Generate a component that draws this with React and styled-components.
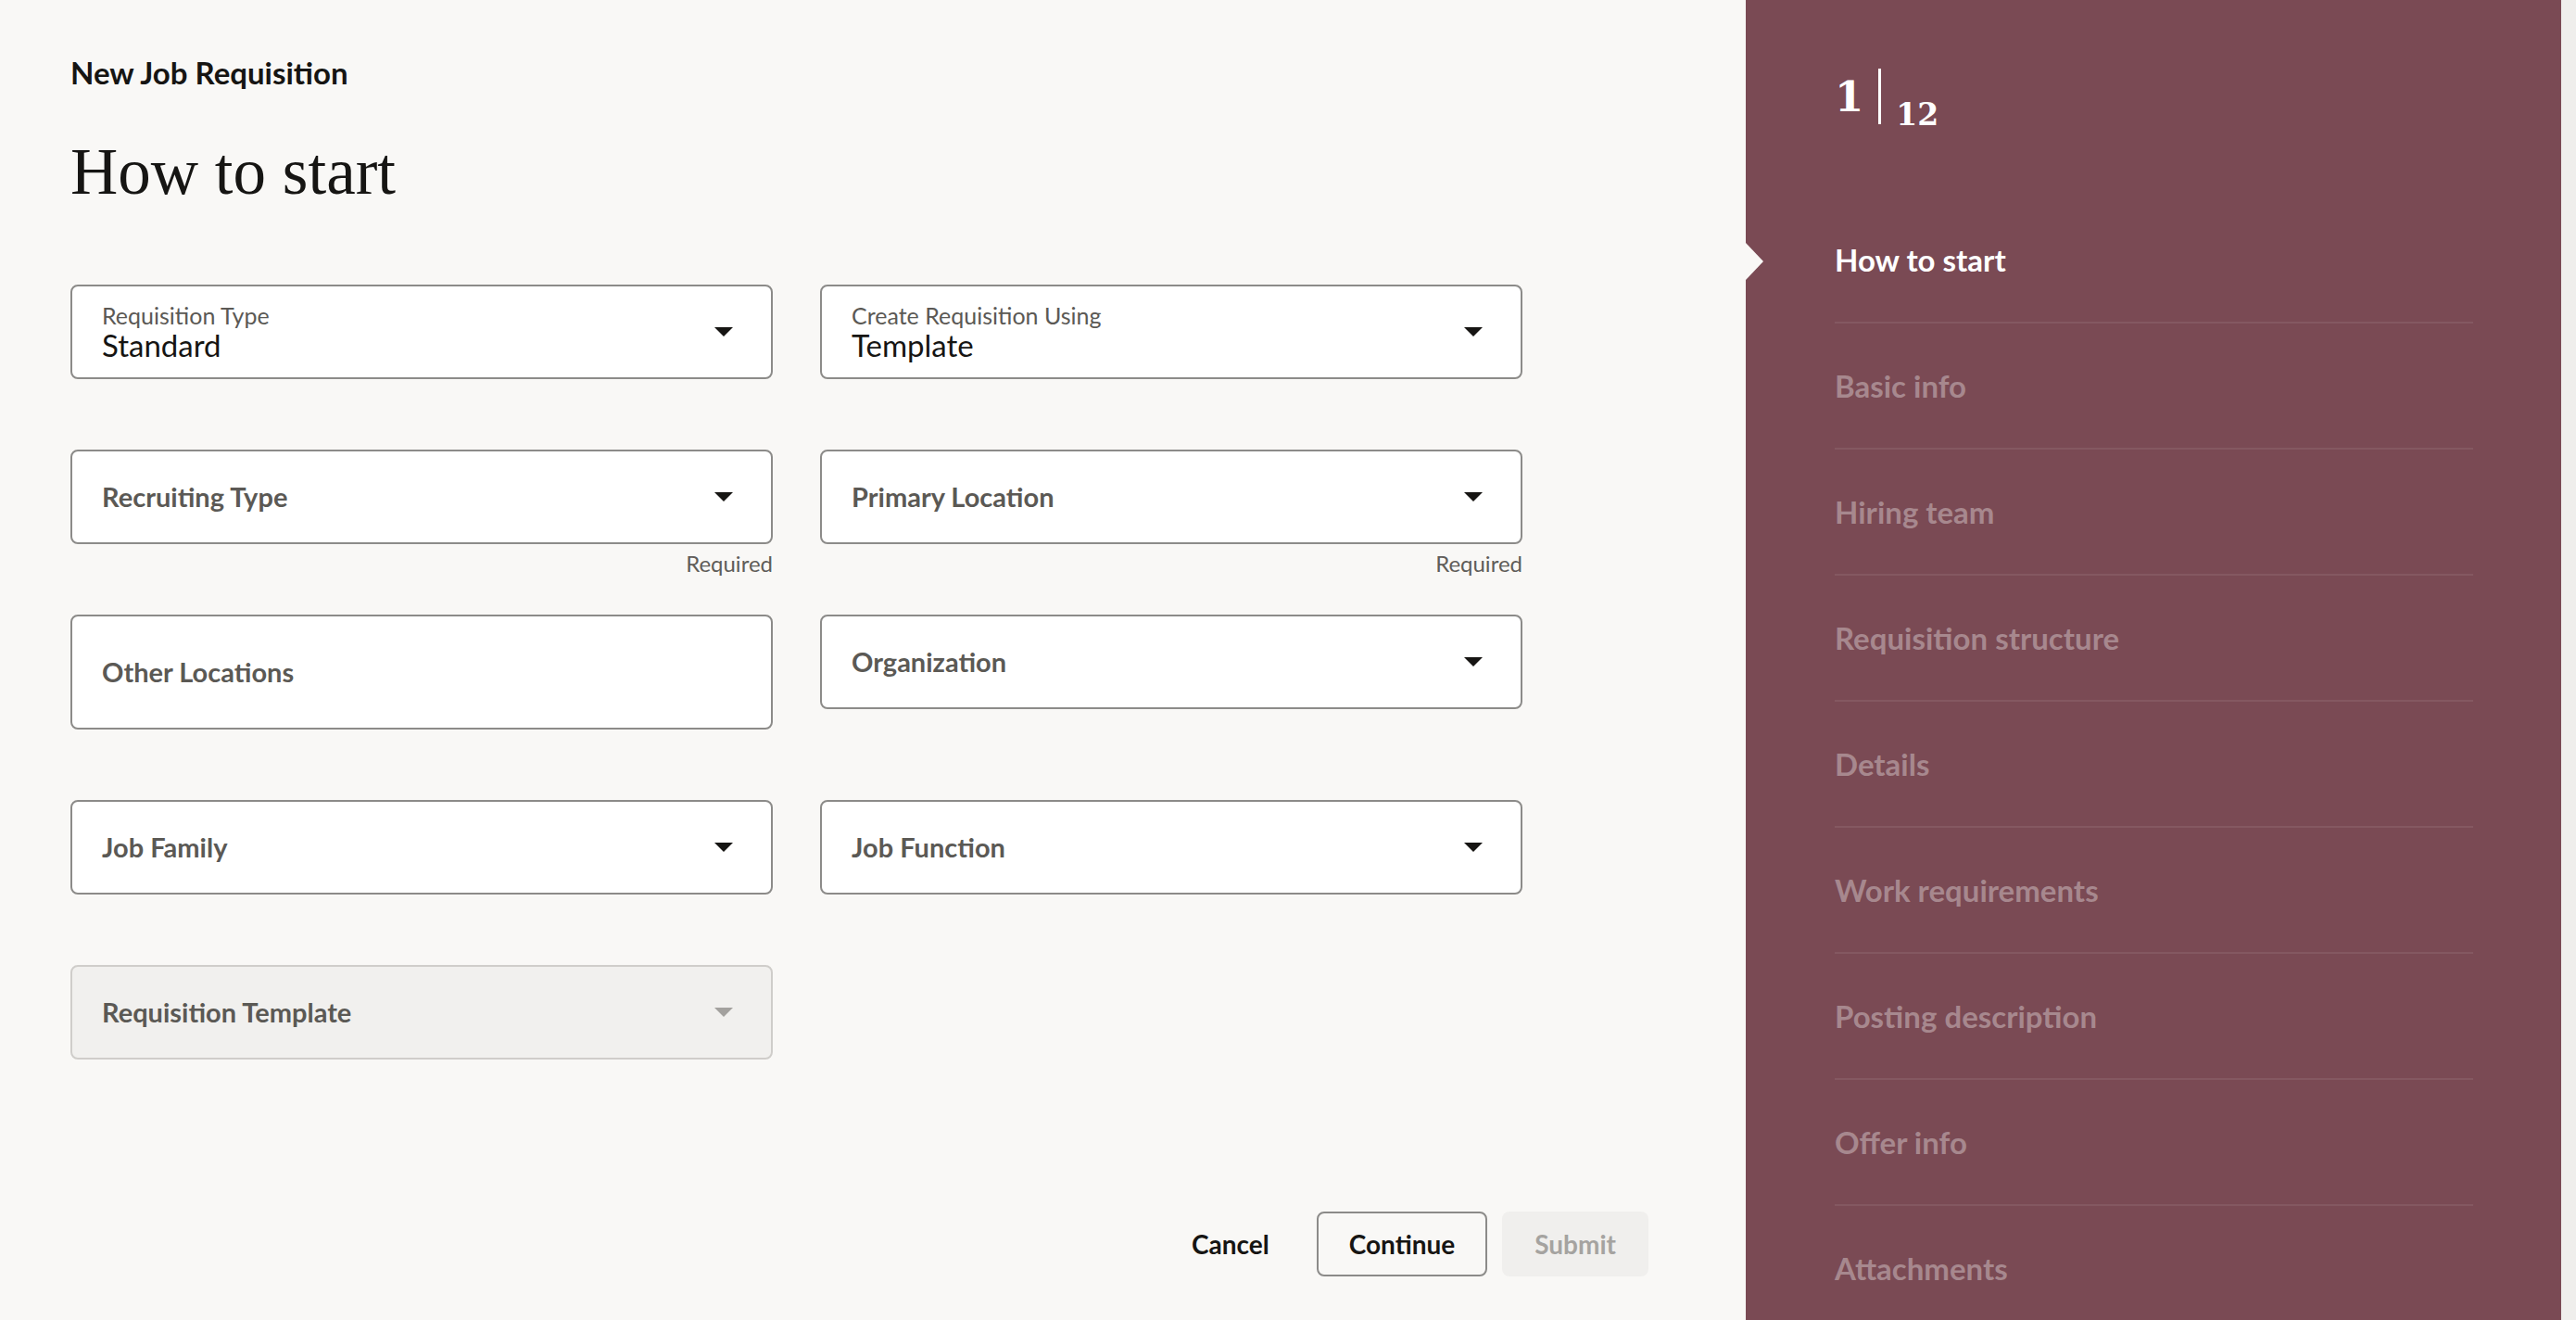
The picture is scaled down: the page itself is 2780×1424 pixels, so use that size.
import React from "react";
import styled, { createGlobalStyle, css } from "styled-components";

const GlobalStyle = createGlobalStyle`
  html, body {
    margin: 0;
    padding: 0;
    background-color: #f9f8f6;
    font-family: Lato, "Noto Sans", sans-serif;
    color: #161513;
    overflow: hidden;
  }
  * { box-sizing: border-box; }
`;

const Page = styled.div`
  display: flex;
  height: 100vh;
  width: 100vw;
  overflow: hidden;
`;

const Main = styled.main`
  flex: 1;
  display: flex;
  flex-direction: column;
  padding: 58px 105px 47px 76px;
`;

const Eyebrow = styled.div`
  font-size: 33px;
  line-height: 40px;
  font-weight: 700;
`;

const Title = styled.h1`
  margin: 47px 0 0;
  font-family: "Liberation Serif", serif;
  font-weight: 400;
  font-size: 71px;
  line-height: 80px;
`;

const FieldGrid = styled.div`
  margin-top: 82px;
  display: grid;
  grid-template-columns: 758px 758px;
  column-gap: 51px;
  row-gap: 38px;
  align-items: start;
`;

const Field = styled.div`
  display: flex;
  flex-direction: column;
`;

const Box = styled.div`
  height: ${(p) => (p.$tall ? 124 : 102)}px;
  border: 2px solid ${(p) => (p.$disabled ? "#cfcdca" : "#8c8b89")};
  border-radius: 8px;
  background: ${(p) => (p.$disabled ? "#f1f0ee" : "#ffffff")};
  display: flex;
  align-items: center;
  padding: 0 41px 0 32px;
`;

const BoxText = styled.div`
  flex: 1;
  display: flex;
  flex-direction: column;
`;

const SmallLabel = styled.span`
  font-size: 25px;
  line-height: 28px;
  color: #5b5955;
`;

const Value = styled.span`
  font-size: 33px;
  line-height: 36px;
  color: #161513;
`;

const Placeholder = styled.span`
  font-size: 29px;
  line-height: 34px;
  font-weight: 700;
  color: #5b5955;
`;

const Helper = styled.div`
  height: 38px;
  padding-top: 6px;
  text-align: right;
  font-size: 24px;
  line-height: 30px;
  color: #605d59;
`;

const Caret = styled.svg`
  width: 20px;
  height: 10px;
  flex: none;
  fill: ${(p) => (p.$disabled ? "#a3a19e" : "#161513")};
`;

const Footer = styled.div`
  margin-top: auto;
  display: flex;
  justify-content: flex-end;
  gap: 16px;
`;

const Button = styled.button`
  height: 70px;
  padding: 0 33px;
  border-radius: 8px;
  font-family: Lato, "Noto Sans", sans-serif;
  font-size: 28px;
  font-weight: 700;
  line-height: 1;
  cursor: pointer;
  border: 2px solid transparent;
  background: transparent;
  color: #161513;
  ${(p) =>
    p.$variant === "outlined" &&
    css`
      border-color: #8c8b89;
    `}
  ${(p) =>
    p.$variant === "disabled" &&
    css`
      background: #f0efed;
      color: #a5a3a0;
      cursor: default;
    `}
`;

const Panel = styled.aside`
  width: 880px;
  flex: none;
  background: #7a4a54;
  padding: 74px 95px 0 96px;
  overflow: hidden;
  color: #ffffff;
`;

const Counter = styled.div`
  display: flex;
  height: 60px;
  font-family: "DejaVu Serif", serif;
  font-weight: 700;
`;

const Current = styled.span`
  font-size: 45px;
  line-height: 1;
  margin-top: 8px;
`;

const CounterLine = styled.span`
  width: 3px;
  height: 60px;
  background: #ffffff;
  margin: 0 16px 0 16px;
`;

const Total = styled.span`
  align-self: flex-end;
  font-size: 33px;
  line-height: 1;
  margin-bottom: -6px;
`;

const StepList = styled.ul`
  list-style: none;
  margin: 79px 0 0;
  padding: 0;
`;

const Step = styled.li`
  position: relative;
  height: 136px;
  display: flex;
  align-items: center;
  border-bottom: 2px solid rgba(255, 255, 255, 0.08);
  font-size: 33px;
  font-weight: 700;
  color: ${(p) => (p.$active ? "#ffffff" : "rgba(255, 255, 255, 0.35)")};

  ${(p) =>
    p.$active &&
    css`
      &::before {
        content: "";
        position: absolute;
        left: -96px;
        top: 50%;
        margin-top: -18px;
        border-left: 19px solid #f9f8f6;
        border-top: 20px solid transparent;
        border-bottom: 20px solid transparent;
      }
    `}
`;

const ScrollTrack = styled.div`
  width: 16px;
  flex: none;
  background: #efeeec;
`;

function ArrowDown({ disabled }) {
  return (
    <Caret $disabled={disabled} viewBox="0 0 20 10">
      <path d="M0 0 L20 0 L10 10 Z" />
    </Caret>
  );
}

const fields = [
  { label: "Requisition Type", value: "Standard", select: true },
  { label: "Create Requisition Using", value: "Template", select: true },
  { label: "Recruiting Type", select: true, required: true },
  { label: "Primary Location", select: true, required: true },
  { label: "Other Locations", tall: true },
  { label: "Organization", select: true },
  { label: "Job Family", select: true },
  { label: "Job Function", select: true },
  { label: "Requisition Template", select: true, disabled: true },
];

const steps = [
  "How to start",
  "Basic info",
  "Hiring team",
  "Requisition structure",
  "Details",
  "Work requirements",
  "Posting description",
  "Offer info",
  "Attachments",
];

export default function App() {
  return (
    <>
      <GlobalStyle />
      <Page>
        <Main>
          <Eyebrow>New Job Requisition</Eyebrow>
          <Title>How to start</Title>
          <FieldGrid>
            {fields.map((f) => (
              <Field key={f.label}>
                <Box $tall={f.tall} $disabled={f.disabled}>
                  <BoxText>
                    {f.value ? (
                      <>
                        <SmallLabel>{f.label}</SmallLabel>
                        <Value>{f.value}</Value>
                      </>
                    ) : (
                      <Placeholder>{f.label}</Placeholder>
                    )}
                  </BoxText>
                  {f.select && <ArrowDown disabled={f.disabled} />}
                </Box>
                <Helper>{f.required ? "Required" : ""}</Helper>
              </Field>
            ))}
          </FieldGrid>
          <Footer>
            <Button>Cancel</Button>
            <Button $variant="outlined">Continue</Button>
            <Button $variant="disabled" disabled>
              Submit
            </Button>
          </Footer>
        </Main>
        <Panel>
          <Counter>
            <Current>1</Current>
            <CounterLine />
            <Total>12</Total>
          </Counter>
          <StepList>
            {steps.map((s, i) => (
              <Step key={s} $active={i === 0}>
                {s}
              </Step>
            ))}
          </StepList>
        </Panel>
        <ScrollTrack />
      </Page>
    </>
  );
}
